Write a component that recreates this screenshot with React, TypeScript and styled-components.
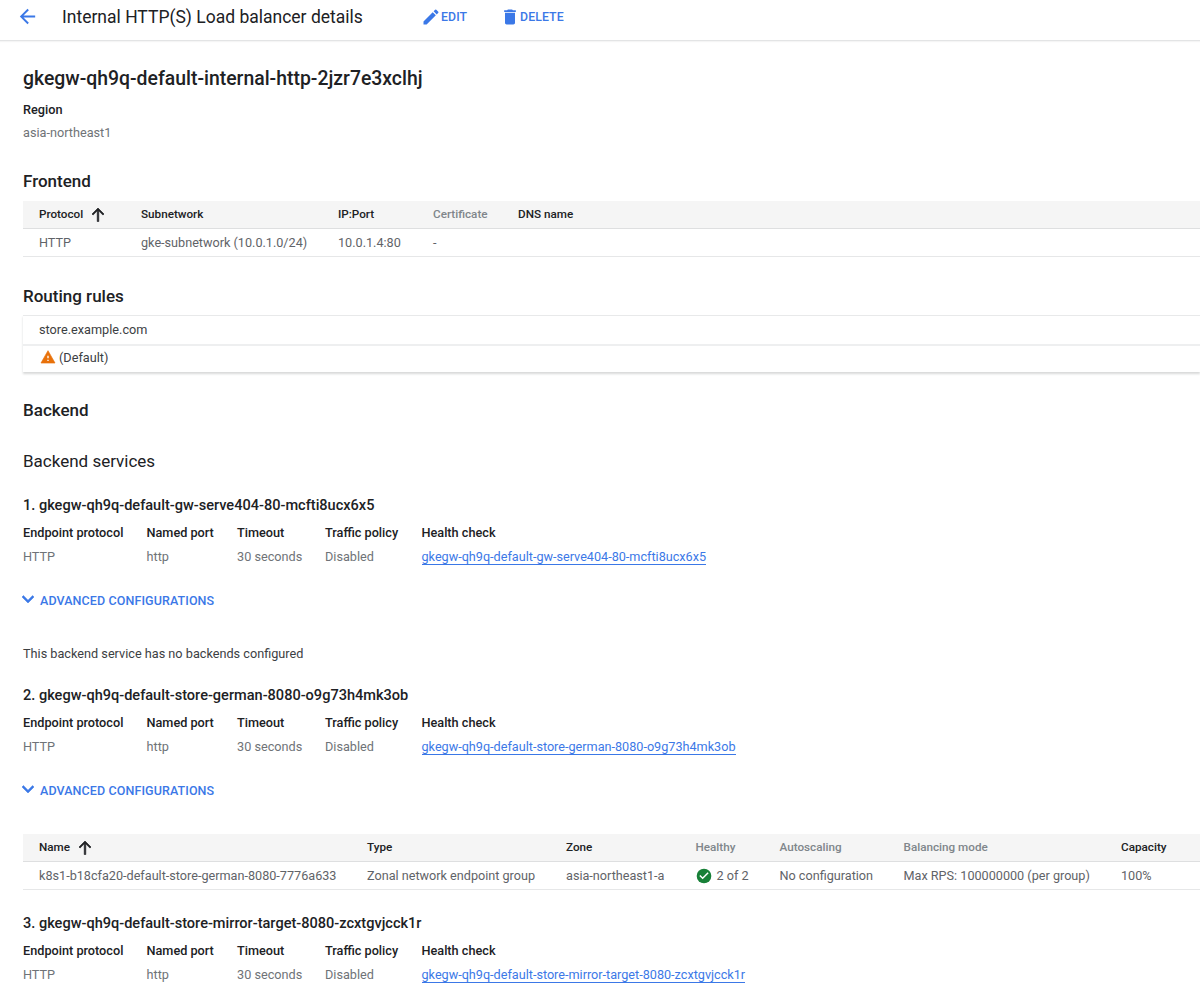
import styled, { createGlobalStyle } from 'styled-components'

const GlobalStyle = createGlobalStyle`
  html, body {
    margin: 0;
    padding: 0;
    height: 991px;
    overflow: hidden;
    background: #fff;
    font-family: Roboto, "Liberation Sans", sans-serif;
    color: #202124;
    font-size: 13px;
  }
  * { box-sizing: border-box; }
`

const TopBar = styled.header`
  height: 41px;
  display: flex;
  align-items: flex-start;
  border-bottom: 1px solid #e3e4e5;
  box-shadow: 0 1px 1px rgba(60, 64, 67, 0.05);
`

const BackButton = styled.div`
  width: 62px;
  height: 33px;
  padding-left: 16px;
  display: flex;
  align-items: center;
  color: #3b78e7;
`

const PageTitle = styled.h1`
  margin: 0;
  width: 359px;
  height: 34px;
  line-height: 34px;
  font-size: 17.5px;
  font-weight: 400;
  color: #202124;
`

const ActionButton = styled.div<{ $width: number }>`
  width: ${(p) => p.$width}px;
  height: 33px;
  display: flex;
  align-items: center;
  gap: 0;
  font-size: 12.3px;
  font-weight: 500;
  letter-spacing: 0.1px;
  color: #3b78e7;
`

const Content = styled.main`
  padding: 26px 0 0 23px;
`

const LbName = styled.h2`
  margin: 0;
  height: 24px;
  line-height: 24px;
  font-size: 19.4px;
  font-weight: 500;
  color: #202124;
`

const Label = styled.div`
  font-size: 12.7px;
  line-height: 18px;
  font-weight: 500;
  color: #202124;
`

const Muted = styled.div`
  font-size: 12.7px;
  line-height: 18px;
  color: #6f7377;
`

const RegionBlock = styled.div`
  margin-top: 10px;
  display: flex;
  flex-direction: column;
  gap: 5px;
`

const SectionTitle = styled.h3<{ $top: number }>`
  margin: ${(p) => p.$top}px 0 0;
  height: 22px;
  line-height: 22px;
  font-size: 17px;
  font-weight: 500;
  color: #202124;
`

const SubTitle = styled.h3`
  margin: 29px 0 0;
  height: 22px;
  line-height: 22px;
  font-size: 17px;
  font-weight: 400;
  color: #202124;
`

const Table = styled.div<{ $columns: string; $top: number }>`
  display: grid;
  grid-template-columns: ${(p) => p.$columns};
  margin-top: ${(p) => p.$top}px;
`

const HeadCell = styled.div<{ $dim?: boolean }>`
  height: 28px;
  background: #f5f5f5;
  border-bottom: 1px solid #dedfe0;
  display: flex;
  align-items: center;
  gap: 6px;
  padding-bottom: 2px;
  font-size: 11.7px;
  font-weight: 500;
  color: ${(p) => (p.$dim ? '#80868b' : '#202124')};
  padding-left: 16px;
  white-space: nowrap;
`

const HeadCellPlain = styled(HeadCell)`
  padding-left: 0;
`

const BodyCell = styled.div`
  height: 28px;
  border-bottom: 1px solid #e6e7e8;
  display: flex;
  align-items: center;
  gap: 5px;
  font-size: 12.65px;
  color: #5f6368;
  padding-left: 16px;
  white-space: nowrap;
`

const BodyCellPlain = styled(BodyCell)`
  padding-left: 0;
`

const RulesCard = styled.div`
  margin-top: 8px;
  border-top: 1px solid #e8e9ea;
  box-shadow: 0 2px 2px rgba(60, 64, 67, 0.2);
`

const RuleRow = styled.div`
  height: 28px;
  display: flex;
  align-items: center;
  gap: 3px;
  padding: 0 0 2px 16px;
  font-size: 12.7px;
  color: #3c4043;
  & + & {
    border-top: 2px solid #eeeff0;
    padding-bottom: 4px;
  }
`

const ServiceTitle = styled.h4<{ $top: number }>`
  margin: ${(p) => p.$top}px 0 0;
  height: 20px;
  line-height: 20px;
  font-size: 14.55px;
  font-weight: 500;
  color: #202124;
`

const ServiceGrid = styled.div`
  display: grid;
  grid-template-columns: 123.5px 90.5px 88px 96.5px auto;
  justify-content: start;
  grid-template-rows: 18px 18px;
  row-gap: 6px;
  margin-top: 8px;
`

const HealthLink = styled.a`
  font-size: 12.65px;
  line-height: 18px;
  color: #3b78e7;
  border-bottom: 1px solid #3b78e7;
  height: 19px;
  white-space: nowrap;
`

const Advanced = styled.div`
  margin-top: 25px;
  margin-left: -7px;
  height: 18px;
  display: flex;
  align-items: center;
  gap: 0;
  font-size: 12.5px;
  font-weight: 500;
  letter-spacing: 0.1px;
  color: #3b78e7;
`

const Note = styled.p`
  margin: 36px 0 0;
  font-size: 12.7px;
  line-height: 18px;
  color: #3c4043;
`

const WarningMark = styled.svg`
  margin-left: 1px;
`

const ArrowUp = () => (
  <svg width="18" height="18" viewBox="0 0 24 24" fill="#202124" stroke="#202124" strokeWidth="0.9">
    <path d="M4 12l1.41 1.41L11 7.83V22h2V7.83l5.58 5.59L20 12l-8-8-8 8z" />
  </svg>
)

const ArrowBack = () => (
  <svg width="23" height="23" viewBox="0 0 24 24" fill="currentColor">
    <path d="M20 11H7.83l5.59-5.59L12 4l-8 8 8 8 1.41-1.41L7.83 13H20v-2z" />
  </svg>
)

const Pencil = () => (
  <svg width="20" height="20" viewBox="0 0 24 24" fill="currentColor">
    <path d="M3 17.25V21h3.75L17.81 9.94l-3.75-3.75L3 17.25zM20.71 7.04a1 1 0 0 0 0-1.41l-2.34-2.34a1 1 0 0 0-1.41 0l-1.83 1.83 3.75 3.75 1.83-1.83z" />
  </svg>
)

const Trash = () => (
  <svg width="20" height="20" viewBox="0 0 24 24" fill="currentColor">
    <path d="M6 19c0 1.1.9 2 2 2h8c1.1 0 2-.9 2-2V7H6v12zM19 4h-3.5l-1-1h-5l-1 1H5v2h14V4z" />
  </svg>
)

const Chevron = () => (
  <svg width="24" height="24" viewBox="0 0 24 24" fill="currentColor" stroke="currentColor" strokeWidth="0.5">
    <path d="M7.41 7.59L12 12.17l4.59-4.58L18 9l-6 6-6-6z" />
  </svg>
)

const Warning = () => (
  <WarningMark width="16" height="16" viewBox="0 0 24 24">
    <path d="M1.5 21h21L12 2.5 1.5 21z" fill="#e8710a" stroke="#e8710a" strokeWidth="1" strokeLinejoin="round" />
    <path d="M13 18h-2v-2h2v2zm0-4h-2v-4h2v4z" fill="#fff" />
  </WarningMark>
)

const CheckCircle = () => (
  <svg width="16" height="16" viewBox="0 0 24 24">
    <circle cx="12" cy="12" r="11" fill="#188038" />
    <path d="M10 17l-5-5 1.6-1.6L10 13.8l7.4-7.4L19 8l-9 9z" fill="#fff" />
  </svg>
)

interface Service {
  name: string
  check: string
  top: number
}

const ServiceBlock = ({ name, check, top }: Service) => (
  <>
    <ServiceTitle $top={top}>{name}</ServiceTitle>
    <ServiceGrid>
      <Label>Endpoint protocol</Label>
      <Label>Named port</Label>
      <Label>Timeout</Label>
      <Label>Traffic policy</Label>
      <Label>Health check</Label>
      <Muted>HTTP</Muted>
      <Muted>http</Muted>
      <Muted>30 seconds</Muted>
      <Muted>Disabled</Muted>
      <div>
        <HealthLink>{check}</HealthLink>
      </div>
    </ServiceGrid>
  </>
)

const AdvancedToggle = () => (
  <Advanced>
    <Chevron />
    ADVANCED CONFIGURATIONS
  </Advanced>
)

export default function App() {
  return (
    <>
      <GlobalStyle />
      <TopBar>
        <BackButton>
          <ArrowBack />
        </BackButton>
        <PageTitle>Internal HTTP(S) Load balancer details</PageTitle>
        <ActionButton $width={79}>
          <Pencil />
          EDIT
        </ActionButton>
        <ActionButton $width={90}>
          <Trash />
          DELETE
        </ActionButton>
      </TopBar>
      <Content>
        <LbName>gkegw-qh9q-default-internal-http-2jzr7e3xclhj</LbName>
        <RegionBlock>
          <Label>Region</Label>
          <Muted>asia-northeast1</Muted>
        </RegionBlock>

        <SectionTitle $top={28}>Frontend</SectionTitle>
        <Table $columns="118px 197px 95px 85px 132px 1fr" $top={9}>
          <HeadCell>
            Protocol
            <ArrowUp />
          </HeadCell>
          <HeadCellPlain>Subnetwork</HeadCellPlain>
          <HeadCellPlain>IP:Port</HeadCellPlain>
          <HeadCellPlain $dim>Certificate</HeadCellPlain>
          <HeadCellPlain>DNS name</HeadCellPlain>
          <HeadCellPlain />
          <BodyCell>HTTP</BodyCell>
          <BodyCellPlain>gke-subnetwork (10.0.1.0/24)</BodyCellPlain>
          <BodyCellPlain>10.0.1.4:80</BodyCellPlain>
          <BodyCellPlain>-</BodyCellPlain>
          <BodyCellPlain />
          <BodyCellPlain />
        </Table>

        <SectionTitle $top={28}>Routing rules</SectionTitle>
        <RulesCard>
          <RuleRow>store.example.com</RuleRow>
          <RuleRow>
            <Warning />
            (Default)
          </RuleRow>
        </RulesCard>

        <SectionTitle $top={27}>Backend</SectionTitle>
        <SubTitle>Backend services</SubTitle>

        <ServiceBlock
          top={24}
          name="1. gkegw-qh9q-default-gw-serve404-80-mcfti8ucx6x5"
          check="gkegw-qh9q-default-gw-serve404-80-mcfti8ucx6x5"
        />
        <AdvancedToggle />
        <Note>This backend service has no backends configured</Note>

        <ServiceBlock
          top={23}
          name="2. gkegw-qh9q-default-store-german-8080-o9g73h4mk3ob"
          check="gkegw-qh9q-default-store-german-8080-o9g73h4mk3ob"
        />
        <AdvancedToggle />

        <Table $columns="344px 199px 129.5px 84px 124px 217.5px 79px" $top={35}>
          <HeadCell>
            Name
            <ArrowUp />
          </HeadCell>
          <HeadCellPlain>Type</HeadCellPlain>
          <HeadCellPlain>Zone</HeadCellPlain>
          <HeadCellPlain $dim>Healthy</HeadCellPlain>
          <HeadCellPlain $dim>Autoscaling</HeadCellPlain>
          <HeadCellPlain $dim>Balancing mode</HeadCellPlain>
          <HeadCellPlain>Capacity</HeadCellPlain>
          <BodyCell>k8s1-b18cfa20-default-store-german-8080-7776a633</BodyCell>
          <BodyCellPlain>Zonal network endpoint group</BodyCellPlain>
          <BodyCellPlain>asia-northeast1-a</BodyCellPlain>
          <BodyCellPlain>
            <CheckCircle />
            2 of 2
          </BodyCellPlain>
          <BodyCellPlain>No configuration</BodyCellPlain>
          <BodyCellPlain>Max RPS: 100000000 (per group)</BodyCellPlain>
          <BodyCellPlain>100%</BodyCellPlain>
        </Table>

        <ServiceBlock
          top={24}
          name="3. gkegw-qh9q-default-store-mirror-target-8080-zcxtgvjcck1r"
          check="gkegw-qh9q-default-store-mirror-target-8080-zcxtgvjcck1r"
        />
      </Content>
    </>
  )
}
